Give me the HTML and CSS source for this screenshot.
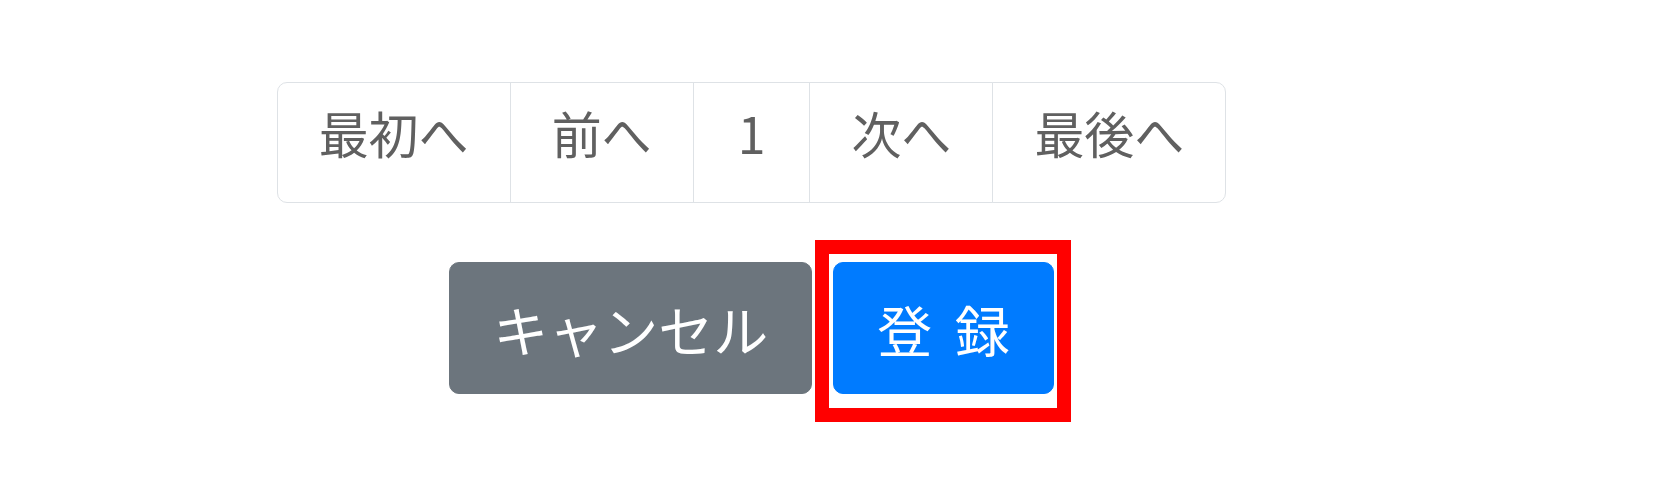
FILE: index.html
```html
<!DOCTYPE html>
<html lang="ja">
<head>
<meta charset="utf-8">
<title>登録</title>
<link rel="stylesheet" href="styles.css">
</head>
<body>
<div class="page">
  <nav class="pager">
    <ul class="pagination">
      <li class="page-item"><a class="page-link" href="#">最初へ</a></li>
      <li class="page-item"><a class="page-link" href="#">前へ</a></li>
      <li class="page-item"><a class="page-link num" href="#">1</a></li>
      <li class="page-item"><a class="page-link" href="#">次へ</a></li>
      <li class="page-item"><a class="page-link" href="#">最後へ</a></li>
    </ul>
  </nav>
  <div class="actions">
    <button class="btn btn-secondary" type="button">キャンセル</button>
    <div class="highlight-wrap">
      <button class="btn btn-primary" type="submit">登 録</button>
      <div class="highlight"></div>
    </div>
  </div>
</div>
</body>
</html>
```

FILE: styles.css
```css
html, body {
  margin: 0;
  padding: 0;
  background: #ffffff;
}

body {
  font-family: "Noto Sans CJK JP", "Noto Sans", sans-serif;
}

.page {
  width: 1503px;
  padding-top: 82px;
  padding-bottom: 80px;
  display: flex;
  flex-direction: column;
  align-items: center;
}

.pagination {
  display: flex;
  list-style: none;
  margin: 0;
  padding: 0;
}

.page-item + .page-item {
  margin-left: -1px;
}

.page-link {
  display: block;
  font-size: 50px;
  line-height: 62px;
  padding: 18px 41px 39px;
  color: #606060;
  text-decoration: none;
  border: 1px solid #dee2e6;
  background: #ffffff;
}

.page-link.num {
  padding-left: 44px;
  padding-right: 44px;
}

.page-item:first-child .page-link {
  border-radius: 10px 0 0 10px;
}

.page-item:last-child .page-link {
  border-radius: 0 10px 10px 0;
}

.actions {
  display: flex;
  align-items: flex-start;
  gap: 21px;
  margin-top: 59px;
}

.btn {
  display: block;
  font-family: "Noto Sans CJK JP", "Noto Sans", sans-serif;
  font-size: 55px;
  line-height: 82px;
  padding: 24px 43px;
  border: 1px solid transparent;
  border-radius: 10px;
  color: #ffffff;
  cursor: pointer;
}

.btn-secondary {
  background: #6c757d;
  border-color: #6c757d;
}

.btn-primary {
  background: #007bff;
  border-color: #007bff;
  word-spacing: 10px;
}

.highlight-wrap {
  position: relative;
}

.highlight {
  position: absolute;
  box-sizing: border-box;
  left: -18px;
  top: -22px;
  width: 256px;
  height: 182px;
  border: 14px solid #ff0000;
  pointer-events: none;
}
```
